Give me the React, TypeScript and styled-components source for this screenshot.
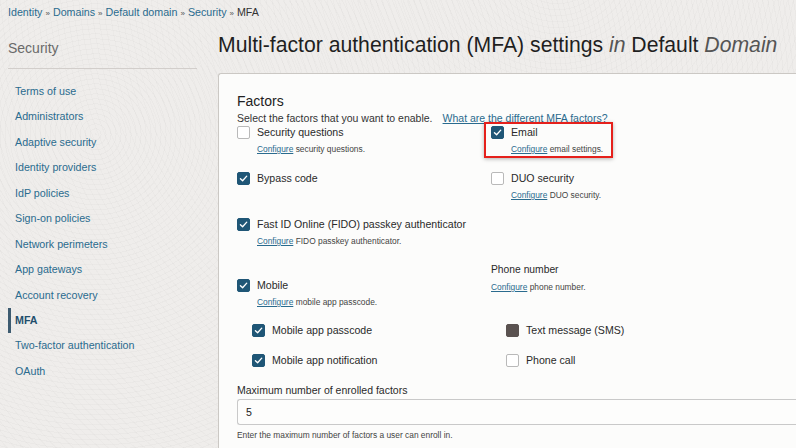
import React from "react";
import styled, { createGlobalStyle } from "styled-components";

const Global = createGlobalStyle`
  html, body { margin: 0; padding: 0; }
  body {
    width: 796px; height: 448px; overflow: hidden;
    font-family: "Liberation Sans", Arial, sans-serif;
    background:
      repeating-radial-gradient(circle at 12% 30%, rgba(0,0,0,0.018) 0 1px, transparent 1px 5px),
      repeating-radial-gradient(circle at 70% -10%, rgba(0,0,0,0.015) 0 1px, transparent 1px 6px),
      #efedeb;
    color: #222;
  }
`;

const Page = styled.div`
  width: 796px;
  height: 448px;
  overflow: hidden;
`;

const Breadcrumb = styled.nav`
  padding: 4px 8px 0;
  font-size: 10.7px;
  line-height: 16px;
  color: #333;
  white-space: nowrap;
`;

const Crumb = styled.a`
  color: #2a6b8e;
  text-decoration: none;
`;

const Sep = styled.span`
  color: #555;
  font-size: 8px;
  margin: 0 3px;
`;

const Columns = styled.div`
  display: grid;
  grid-template-columns: 218px 1fr;
  margin-top: 9px;
`;

const Sidebar = styled.aside`
  padding-left: 8px;
  width: 189px;
`;

const SideTitle = styled.div`
  margin-top: 6px;
  font-size: 14px;
  line-height: 22px;
  color: #6a6a6a;
  padding-bottom: 9px;
  border-bottom: 1px solid #d2cecb;
`;

const NavList = styled.ul`
  list-style: none;
  margin: 10px 0 0;
  padding: 0;
`;

const NavItem = styled.li<{ $active?: boolean }>`
  height: 25.45px;
  line-height: 25.45px;
  padding-left: 4px;
  font-size: 10.7px;
  color: ${(p) => (p.$active ? "#1f4e6c" : "#2a6b8e")};
  font-weight: ${(p) => (p.$active ? 700 : 400)};
  border-left: 3px solid ${(p) => (p.$active ? "#3d5b70" : "transparent")};
  box-sizing: border-box;
`;

const Main = styled.main`
  min-width: 0;
`;

const Title = styled.h1`
  margin: 1px 0 0;
  font-size: 21.2px;
  line-height: 26px;
  font-weight: 400;
  color: #1f1f1f;
  white-space: nowrap;
`;

const Soft = styled.em`
  font-style: italic;
  color: #555;
`;

const Card = styled.section`
  margin-top: 15px;
  background: #fcfcfb;
  border: 1px solid #cbc8c4;
  border-right: none;
  border-bottom: none;
  border-top-left-radius: 3px;
  padding: 17px 0 0 18px;
  height: 400px;
  box-sizing: border-box;
`;

const SectionTitle = styled.h2`
  margin: 0;
  font-size: 14px;
  line-height: 20px;
  font-weight: 400;
  color: #222;
`;

const Subtitle = styled.p`
  margin: 0;
  font-size: 10.5px;
  line-height: 14px;
  color: #333;
`;

const HelpLink = styled.a`
  color: #2a6b8e;
  text-decoration: underline;
  margin-left: 10px;
`;

const FactorGrid = styled.div`
  display: grid;
  grid-template-columns: 254px 1fr;
  row-gap: 13px;
  margin-top: -2px;
`;

const SubGrid = styled.div`
  display: grid;
  grid-template-columns: 254px 1fr;
  row-gap: 12px;
  margin-top: 12px;
`;

const Cell = styled.div<{ $indent?: number; $offset?: number }>`
  position: relative;
  padding-left: ${(p) => p.$indent ?? 0}px;
  margin-top: ${(p) => p.$offset ?? 0}px;
`;

const OptionRow = styled.label`
  display: flex;
  align-items: center;
  gap: 7px;
  height: 18px;
  font-size: 10.6px;
  color: #2a2a2a;
  white-space: nowrap;
`;

const Box = styled.span<{ $state: "on" | "off" | "solid" }>`
  width: 13px;
  height: 13px;
  box-sizing: border-box;
  border-radius: 2px;
  flex: none;
  display: flex;
  align-items: center;
  justify-content: center;
  background: ${(p) =>
    p.$state === "on" ? "#1f5676" : p.$state === "solid" ? "#5a5250" : "#fff"};
  border: 1px solid
    ${(p) => (p.$state === "on" ? "#1f5676" : p.$state === "solid" ? "#5a5250" : "#b9b9b9")};
`;

const ConfigLine = styled.div`
  margin-top: 1px;
  padding-left: 20px;
  font-size: 8.4px;
  line-height: 14px;
  color: #444;
  white-space: nowrap;
`;

const ConfigLink = styled.a`
  color: #2a6b8e;
  text-decoration: underline;
`;

const PlainLabel = styled.div`
  height: 18px;
  line-height: 18px;
  font-size: 10.3px;
  color: #2a2a2a;
`;

const PlainConfig = styled(ConfigLine)`
  padding-left: 0;
`;

const Highlight = styled.div`
  position: absolute;
  left: -7px;
  top: -1px;
  width: 129px;
  height: 36px;
  box-sizing: border-box;
  border: 2px solid #e5201b;
  box-shadow: 0 1px 4px rgba(0, 0, 0, 0.3);
  pointer-events: none;
`;

const FieldLabel = styled.div`
  margin-top: 12px;
  font-size: 10.5px;
  line-height: 18px;
  color: #2a2a2a;
`;

const Input = styled.div`
  height: 26px;
  box-sizing: border-box;
  border: 1px solid #c9c9c9;
  border-right: none;
  border-radius: 3px 0 0 3px;
  background: #fdfdfc;
  padding-left: 8px;
  font-size: 10.6px;
  line-height: 24px;
  color: #222;
`;

const Help = styled.div`
  margin-top: 3px;
  font-size: 8.4px;
  line-height: 14px;
  color: #444;
`;

const Check = () => (
  <svg width="9" height="9" viewBox="0 0 10 10">
    <path d="M1.6 5.2 L4 7.5 L8.6 2.4" fill="none" stroke="#fff" strokeWidth="1.5" strokeLinecap="round" strokeLinejoin="round" />
  </svg>
);

type State = "on" | "off" | "solid";

const Option: React.FC<{ state: State; label: string; config?: React.ReactNode }> = ({ state, label, config }) => (
  <>
    <OptionRow>
      <Box $state={state}>{state === "on" && <Check />}</Box>
      {label}
    </OptionRow>
    {config && <ConfigLine>{config}</ConfigLine>}
  </>
);

const Cfg: React.FC<{ text: string }> = ({ text }) => (
  <>
    <ConfigLink>Configure</ConfigLink> {text}
  </>
);

const nav = [
  "Terms of use",
  "Administrators",
  "Adaptive security",
  "Identity providers",
  "IdP policies",
  "Sign-on policies",
  "Network perimeters",
  "App gateways",
  "Account recovery",
  "MFA",
  "Two-factor authentication",
  "OAuth",
];

export default function App() {
  return (
    <Page>
      <Global />
      <Breadcrumb>
        <Crumb>Identity</Crumb>
        <Sep>»</Sep>
        <Crumb>Domains</Crumb>
        <Sep>»</Sep>
        <Crumb>Default domain</Crumb>
        <Sep>»</Sep>
        <Crumb>Security</Crumb>
        <Sep>»</Sep>
        <span>MFA</span>
      </Breadcrumb>
      <Columns>
        <Sidebar>
          <SideTitle>Security</SideTitle>
          <NavList>
            {nav.map((n) => (
              <NavItem key={n} $active={n === "MFA"}>
                {n}
              </NavItem>
            ))}
          </NavList>
        </Sidebar>
        <Main>
          <Title>
            Multi-factor authentication (MFA) settings <Soft>in</Soft> Default <Soft>Domain</Soft>
          </Title>
          <Card>
            <SectionTitle>Factors</SectionTitle>
            <Subtitle>
              Select the factors that you want to enable.
              <HelpLink>What are the different MFA factors?</HelpLink>
            </Subtitle>
            <FactorGrid>
              <Cell>
                <Option state="off" label="Security questions" config={<Cfg text="security questions." />} />
              </Cell>
              <Cell>
                <Highlight />
                <Option state="on" label="Email" config={<Cfg text="email settings." />} />
              </Cell>
              <Cell>
                <Option state="on" label="Bypass code" />
              </Cell>
              <Cell>
                <Option state="off" label="DUO security" config={<Cfg text="DUO security." />} />
              </Cell>
              <Cell>
                <Option
                  state="on"
                  label="Fast ID Online (FIDO) passkey authenticator"
                  config={<Cfg text="FIDO passkey authenticator." />}
                />
              </Cell>
              <Cell />
              <Cell $offset={15}>
                <Option state="on" label="Mobile" config={<Cfg text="mobile app passcode." />} />
              </Cell>
              <Cell>
                <PlainLabel>Phone number</PlainLabel>
                <PlainConfig>
                  <Cfg text="phone number." />
                </PlainConfig>
              </Cell>
            </FactorGrid>
            <SubGrid>
              <Cell $indent={15}>
                <Option state="on" label="Mobile app passcode" />
              </Cell>
              <Cell $indent={15}>
                <Option state="solid" label="Text message (SMS)" />
              </Cell>
              <Cell $indent={15}>
                <Option state="on" label="Mobile app notification" />
              </Cell>
              <Cell $indent={15}>
                <Option state="off" label="Phone call" />
              </Cell>
            </SubGrid>
            <FieldLabel>Maximum number of enrolled factors</FieldLabel>
            <Input>5</Input>
            <Help>Enter the maximum number of factors a user can enroll in.</Help>
          </Card>
        </Main>
      </Columns>
    </Page>
  );
}
